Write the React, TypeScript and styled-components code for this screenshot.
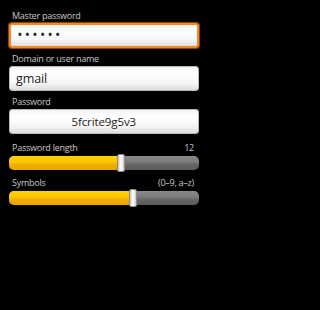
import styled, { createGlobalStyle } from "styled-components";

const GlobalStyle = createGlobalStyle`
  html, body {
    margin: 0;
    padding: 0;
    background: #000;
  }
  body {
    font-family: "Open Sans", "DejaVu Sans", sans-serif;
    width: 207px;
    height: 310px;
    overflow: hidden;
  }
`;

const Screen = styled.div`
  display: flex;
  flex-direction: column;
  padding: 9.5px 8.5px 0 9px;
  background: #000;
  height: 310px;
  box-sizing: border-box;
`;

const Section = styled.div<{ $gap?: number }>`
  display: flex;
  flex-direction: column;
  margin-bottom: ${(p) => p.$gap ?? 0}px;
`;

const LabelRow = styled.div<{ $space?: number }>`
  display: flex;
  justify-content: space-between;
  padding: 0 4.5px 0 3px;
  height: 11px;
  line-height: 11px;
  font-size: 9px;
  letter-spacing: -0.25px;
  color: #c8c8c8;
  margin-bottom: ${(p) => p.$space ?? 2}px;
`;

const Field = styled.div<{ $focused?: boolean; $centered?: boolean }>`
  height: 25.5px;
  box-sizing: border-box;
  border-radius: 3px;
  display: flex;
  align-items: center;
  justify-content: ${(p) => (p.$centered ? "center" : "flex-start")};
  padding: 0 6px;
  font-size: 12px;
  color: #222;
  background: linear-gradient(#f4f4f4 0%, #ffffff 30%, #f6f6f6 70%, #dcdcdc 100%);
  border: ${(p) => (p.$focused ? "2px solid #f08a24" : "1px solid #b8b8b8")};
  box-shadow: ${(p) => (p.$focused ? "0 0 1px 1px #a04a10" : "none")};
`;

const Value = styled.span<{ $size?: number }>`
  font-size: ${(p) => p.$size ?? 12}px;
  letter-spacing: -0.1px;
`;

const Dots = styled.span`
  letter-spacing: 3.8px;
  font-size: 10px;
  font-weight: bold;
  padding-left: 1px;
  margin-top: -2px;
`;

const SliderRow = styled.div`
  position: relative;
  height: 18px;
  display: flex;
  align-items: center;
`;

const Track = styled.div`
  flex: 1;
  height: 14px;
  border-radius: 5px;
  overflow: hidden;
  display: flex;
  background: linear-gradient(#8a8a8a 0%, #7a7a7a 45%, #666 60%, #5a5a5a 100%);
`;

const Fill = styled.div`
  height: 100%;
  background: linear-gradient(#ffd200 0%, #fcc400 45%, #f0ae00 60%, #e8a400 100%);
`;

const Thumb = styled.div`
  position: absolute;
  top: 0;
  width: 8px;
  height: 18px;
  margin-left: -4px;
  border-radius: 2px;
  box-sizing: border-box;
  border: 1px solid #8c8c8c;
  background: linear-gradient(90deg, #bdbdbd 0%, #f4f4f4 35%, #ffffff 55%, #c8c8c8 100%);
`;

function Slider({ value }: { value: number }) {
  return (
    <SliderRow>
      <Track>
        <Fill style={{ width: `${value * 100}%` }} />
      </Track>
      <Thumb style={{ left: `${value * 100}%` }} />
    </SliderRow>
  );
}

export default function App() {
  return (
    <>
      <GlobalStyle />
      <Screen>
        <Section $gap={4.5}>
          <LabelRow>Master password</LabelRow>
          <Field $focused>
            <Dots>••••••</Dots>
          </Field>
        </Section>
        <Section $gap={4.5}>
          <LabelRow>Domain or user name</LabelRow>
          <Field>
            <Value $size={12.5}>gmail</Value>
          </Field>
        </Section>
        <Section $gap={8}>
          <LabelRow>Password</LabelRow>
          <Field $centered>
            <Value $size={11.5}>5fcrite9g5v3</Value>
          </Field>
        </Section>
        <Section $gap={4.5}>
          <LabelRow $space={1}>
            <span>Password length</span>
            <span>12</span>
          </LabelRow>
          <Slider value={0.59} />
        </Section>
        <Section>
          <LabelRow $space={1}>
            <span>Symbols</span>
            <span>(0–9, a–z)</span>
          </LabelRow>
          <Slider value={0.654} />
        </Section>
      </Screen>
    </>
  );
}
